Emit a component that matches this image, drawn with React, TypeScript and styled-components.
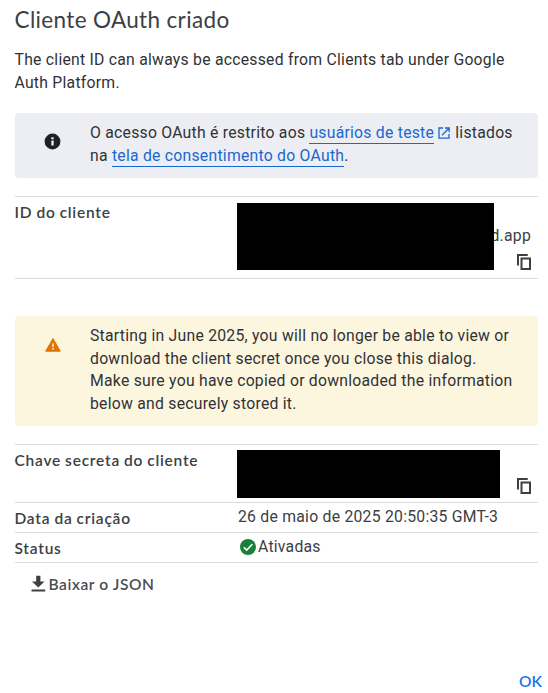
import React from 'react';
import styled, { createGlobalStyle } from 'styled-components';

const GlobalStyle = createGlobalStyle`
  * { box-sizing: border-box; }
  body { margin: 0; background: #fff; }
`;

const Dialog = styled.main`
  display: flex;
  flex-direction: column;
  width: 548px;
  height: 693px;
  padding: 4px 10px 0 14.5px;
  overflow: hidden;
  color: #202124;
  font: 400 15.75px/22.5px Roboto, sans-serif;
  letter-spacing: 0.245px;
`;

const Title = styled.h1`
  margin: 0;
  height: 45px;
  color: #3c4043;
  font: 400 22.5px/32px Lato, sans-serif;
  letter-spacing: 0.35px;
  white-space: nowrap;
`;

const Intro = styled.p`
  margin: 0;
  width: 510px;
  color: #303236;
`;

const Notice = styled.section<{ $tone: 'info' | 'warning' }>`
  display: grid;
  grid-template-columns: 75.5px 1fr;
  width: 523.5px;
  margin-top: ${p => (p.$tone === 'info' ? '18.75px' : '37px')};
  padding: ${p => (p.$tone === 'info' ? '9.25px 0 10.75px' : '9.5px 0 10.5px')};
  border-radius: 4px;
  background: ${p => (p.$tone === 'info' ? '#edeef3' : '#fdf6df')};
`;

const NoticeIcon = styled.span`
  display: flex;
  justify-content: center;
  padding: 10px 0 0 1px;
  height: 30px;
  svg { display: block; }
`;

const NoticeText = styled.p`
  margin: 0;
  color: #303236;
  white-space: nowrap;
`;

const Link = styled.a`
  color: #1967d2;
  text-decoration: none;
  border-bottom: 1px solid #1967d2;
  padding-bottom: 1px;
`;

const LinkIcon = styled.svg`
  display: inline-block;
  width: 14px;
  height: 14px;
  margin: 0 0 0 3px;
  vertical-align: -1.5px;
`;

const Details = styled.dl<{ $top: number }>`
  margin: ${p => p.$top}px 0 0;
  width: 523.5px;
  border-top: 1px solid #dadce0;
`;

const Row = styled.div<{ $height: number }>`
  display: grid;
  grid-template-columns: 222.5px 1fr;
  height: ${p => p.$height}px;
  border-bottom: 1px solid #dadce0;
`;

const Label = styled.dt`
  padding-top: 4px;
  color: #3c4043;
  font: 600 15.5px/22.5px Lato, sans-serif;
  letter-spacing: 0.76px;
  word-spacing: -0.5px;
  white-space: nowrap;
`;

const Value = styled.dd`
  display: flex;
  min-width: 0;
  margin: 0;
  padding: 3px 0 0 1px;
  color: #3c4043;
  white-space: nowrap;
`;

const SecretValue = styled(Value)<{ $top: number }>`
  padding: ${p => p.$top}px 0 0;
`;

const Redaction = styled.span<{ $width: number; $height: number }>`
  position: relative;
  z-index: 1;
  flex: none;
  width: ${p => p.$width}px;
  height: ${p => p.$height}px;
  background: #000;
`;

const Tail = styled.span<{ $top: number }>`
  display: flex;
  flex: 1;
  flex-direction: column;
  align-items: flex-end;
  min-width: 0;
  padding-top: ${p => p.$top}px;
  padding-right: 5px;
`;

const Suffix = styled.span`
  margin: 0 2px 5.5px 0;
`;

const IconButton = styled.button`
  display: flex;
  padding: 0;
  border: 0;
  background: none;
`;

const StatusIcon = styled.svg`
  width: 18px;
  height: 18px;
  margin: 2px 1px 0 1px;
`;

const Download = styled.button`
  display: flex;
  align-items: center;
  align-self: flex-start;
  height: 24px;
  margin: 9px 0 0 14px;
  padding: 0;
  border: 0;
  background: none;
  color: #4a4d51;
  font: 600 15.5px/22.5px Lato, sans-serif;
  letter-spacing: 0.6px;
`;

const Actions = styled.footer`
  display: flex;
  justify-content: flex-end;
  margin-top: auto;
  margin-right: -4px;
  padding-bottom: 1px;
`;

const OkButton = styled.button`
  padding: 0;
  border: 0;
  background: none;
  color: #1a73e8;
  font: 600 15.5px/22px Lato, sans-serif;
  letter-spacing: 0;
`;

const CopyIcon = () => (
  <svg width="18" height="18" viewBox="0 0 18 18" fill="none" stroke="#3c4043" strokeWidth="2">
    <path d="M3 12.5V2h9.7" />
    <rect x="6.5" y="5.5" width="8.5" height="10.5" />
  </svg>
);

export default function App() {
  return (
    <>
      <GlobalStyle />
      <Dialog>
        <Title>Cliente OAuth criado</Title>
        <Intro>
          The client ID can always be accessed from Clients tab under Google<br />Auth Platform.
        </Intro>

        <Notice $tone="info">
          <NoticeIcon>
            <svg width="19" height="19" viewBox="0 0 24 24" fill="#202124">
              <path d="M12 2a10 10 0 1 0 0 20 10 10 0 0 0 0-20zm1.5 15h-3v-6.2h3zm0-7.8h-3V6.5h3z" />
            </svg>
          </NoticeIcon>
          <NoticeText>
            O acesso OAuth é restrito aos <Link>usuários de teste</Link>
            <LinkIcon viewBox="0 0 14 14" fill="none" stroke="#1967d2" strokeWidth="1.3">
              <path d="M6 2H2v10.2h10V8M8 2h4.2v4.2M12.2 2 5 9.2" />
            </LinkIcon>{' '}
            listados<br />na <Link>tela de consentimento do OAuth</Link>.
          </NoticeText>
        </Notice>

        <Details $top={18}>
          <Row $height={82}>
            <Label>ID do cliente</Label>
            <SecretValue $top={6}>
              <Redaction $width={257} $height={67} />
              <Tail $top={22}>
                <Suffix>d.app</Suffix>
                <IconButton aria-label="Copiar ID do cliente"><CopyIcon /></IconButton>
              </Tail>
            </SecretValue>
          </Row>
        </Details>

        <Notice $tone="warning">
          <NoticeIcon>
            <svg width="18" height="20" viewBox="0 0 18 20">
              <path d="M9 3.5 16.3 16.2H1.7z" fill="#e37400" stroke="#e37400" strokeWidth="1" strokeLinejoin="round" />
              <path d="M8.2 8.5h1.6v3.500H8.200zm0 4.500h1.600v1.600H8.200z" fill="#fdf6df" />
            </svg>
          </NoticeIcon>
          <NoticeText>
            Starting in June 2025, you will no longer be able to view or<br />
            download the client secret once you close this dialog.<br />
            Make sure you have copied or downloaded the information<br />
            below and securely stored it.
          </NoticeText>
        </Notice>

        <Details $top={18.5}>
          <Row $height={57.25}>
            <Label>Chave secreta do cliente</Label>
            <SecretValue $top={4.5}>
              <Redaction $width={263} $height={48} />
              <Tail $top={27}>
                <IconButton aria-label="Copiar chave secreta"><CopyIcon /></IconButton>
              </Tail>
            </SecretValue>
          </Row>
          <Row $height={30.5}>
            <Label>Data da criação</Label>
            <Value>26 de maio de 2025 20:50:35 GMT-3</Value>
          </Row>
          <Row $height={30}>
            <Label>Status</Label>
            <Value>
              <StatusIcon viewBox="0 0 18 18">
                <circle cx="9" cy="9" r="8" fill="#188038" />
                <path d="m4.8 9.2 2.9 2.9 5.600-5.800" fill="none" stroke="#fff" strokeWidth="1.6" />
              </StatusIcon>
              Ativadas
            </Value>
          </Row>
        </Details>

        <Download>
          <svg width="20" height="20" viewBox="0 0 20 20" fill="#3c4043">
            <path d="M7.2 1.8h4.2v5.6h4.1L9.3 13.5 3 7.400h4.200zM2.500 15.500h13.700v2H2.500z" />
          </svg>
          Baixar o JSON
        </Download>

        <Actions><OkButton>OK</OkButton></Actions>
      </Dialog>
    </>
  );
}
